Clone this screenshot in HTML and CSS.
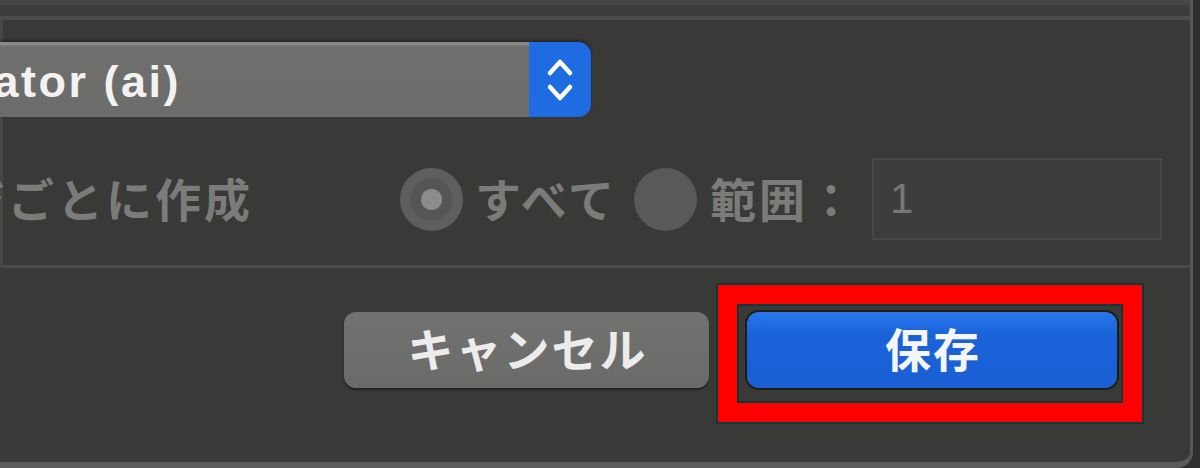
FILE: index.html
```html
<!DOCTYPE html>
<html lang="ja">

<head>
    <meta charset="UTF-8">
    <title>書き出し</title>
    <link rel="stylesheet" href="styles.css">
</head>

<body>
    <div class="window">
        <div class="titlebar"></div>
        <div class="rule"></div>

        <div class="options">
            <div class="format-row">
                <div class="select">
                    <div class="select-value"><span>Adobe Illustrator (ai)</span></div>
                    <div class="select-arrows">
                        <svg width="30" height="48" viewBox="0 0 30 48">
                            <path d="M5 17 L15 6 L25 17" fill="none" stroke="#fff" stroke-width="4.5" stroke-linecap="round" stroke-linejoin="round" />
                            <path d="M5 31 L15 42 L25 31" fill="none" stroke="#fff" stroke-width="4.5" stroke-linecap="round" stroke-linejoin="round" />
                        </svg>
                    </div>
                </div>
            </div>

            <div class="page-row">
                <div class="page-label"><span>ページごとに作成</span></div>
                <div class="radio checked"></div>
                <span class="radio-text">すべて</span>
                <div class="radio"></div>
                <span class="radio-text range-text">範囲：</span>
                <div class="range-input">1</div>
            </div>
        </div>

        <div class="footer">
            <button class="btn cancel">キャンセル</button>
            <button class="btn save">保存</button>
            <div class="highlight"></div>
        </div>
    </div>
</body>

</html>
```

FILE: styles.css
```css
/* dialog, dark mode */
body {
    margin: 0;
    width: 1200px;
    height: 468px;
    overflow: hidden;
    background-color: #2f2f2f;
    font-family: "Noto Sans CJK JP", "Noto Sans", sans-serif;
}

.window {
    width: 1190px;
    height: 462px;
    background-color: #393937;
    border-right: 3px solid #575757;
    border-bottom: 6px solid #5b5b5b;
    border-bottom-right-radius: 16px;
    display: flex;
    flex-direction: column;
}

.titlebar {
    height: 16px;
    background: linear-gradient(#474747 0, #474747 4px, #3d3d3c 6px, #3d3d3c 100%);
}

.rule {
    height: 4px;
    background-color: #4c4c4b;
}

.options {
    border-left: 3px solid #464645;
    border-bottom: 3px solid #4b4b4a;
    height: 245px;
}

.format-row {
    padding-top: 22px;
}

.select {
    display: flex;
    width: 591px;
    height: 75px;
    margin-left: -3px;
    border-radius: 0 13px 13px 0;
    overflow: hidden;
    box-shadow: 0 -2px 3px rgba(0, 0, 0, 0.35);
}

.select-value {
    width: 529px;
    background: linear-gradient(#8a8a88 0, #8a8a88 3px, #6f6f6d 4px, #6c6c6a 100%);
    display: flex;
    align-items: center;
    overflow: hidden;
}

.select-value span {
    width: 181px;
    display: flex;
    justify-content: flex-end;
    white-space: nowrap;
    font-family: "Liberation Sans", Arial, sans-serif;
    font-weight: bold;
    font-size: 45px;
    letter-spacing: 2.5px;
    color: #f2f2f2;
    padding-top: 4px;
}

.select-arrows {
    flex: 1;
    background-color: #1f6be2;
    display: flex;
    align-items: center;
    justify-content: center;
}

.page-row {
    display: flex;
    align-items: center;
    margin-top: 42px;
    height: 80px;
    color: #7b7b79;
    font-size: 46px;
    font-weight: bold;
    letter-spacing: 3px;
}

.page-label {
    width: 253px;
    display: flex;
    justify-content: flex-end;
    overflow: hidden;
    white-space: nowrap;
    margin-left: -3px;
    margin-right: 147px;
    padding-bottom: 4px;
}

.radio {
    width: 63px;
    height: 63px;
    border-radius: 50%;
    background-color: #595958;
    flex-shrink: 0;
}

.radio.checked {
    background: radial-gradient(circle, #8c8c8a 0, #8c8c8a 10px, #555554 11px, #555554 20px, #5e5e5d 22px);
}

.radio-text {
    margin-left: 12px;
    margin-right: 17px;
    padding-bottom: 4px;
}

.range-text {
    margin-left: 13px;
    margin-right: 15px;
}

.range-input {
    width: 270px;
    height: 78px;
    border: 2px solid #474745;
    background-color: #3d3d3b;
    padding-left: 16px;
    font-family: "Liberation Sans", Arial, sans-serif;
    font-size: 42px;
    font-weight: normal;
    letter-spacing: 0;
    line-height: 78px;
    color: #777775;
}

.footer {
    position: relative;
    flex: 1;
    display: flex;
    justify-content: flex-end;
    align-items: flex-start;
    padding: 44px 73px 0 0;
    gap: 38px;
}

.btn {
    height: 76px;
    border: none;
    border-radius: 12px;
    font-family: "Noto Sans CJK JP", sans-serif;
    font-weight: bold;
    font-size: 46px;
    letter-spacing: 2px;
    color: #ececec;
    padding: 0 0 6px 2px;
}

.cancel {
    width: 365px;
    background: linear-gradient(#727270, #6a6a68);
    box-shadow: 0 2px 2px rgba(0, 0, 0, 0.45);
}

.save {
    width: 370px;
    background: linear-gradient(#2878ee, #1a62d8 30%, #1a5fd4);
    color: #f4f6fa;
    box-shadow: 0 0 0 2px #1e1e12;
}

/* annotation frame around the save button */
.highlight {
    position: absolute;
    left: 718px;
    top: 17px;
    width: 424px;
    height: 137px;
    box-sizing: border-box;
    border: 19px solid #ff0000;
    outline: 2px solid #0f3838;
    box-shadow: inset 0 0 0 2px #0f3838;
}
```
